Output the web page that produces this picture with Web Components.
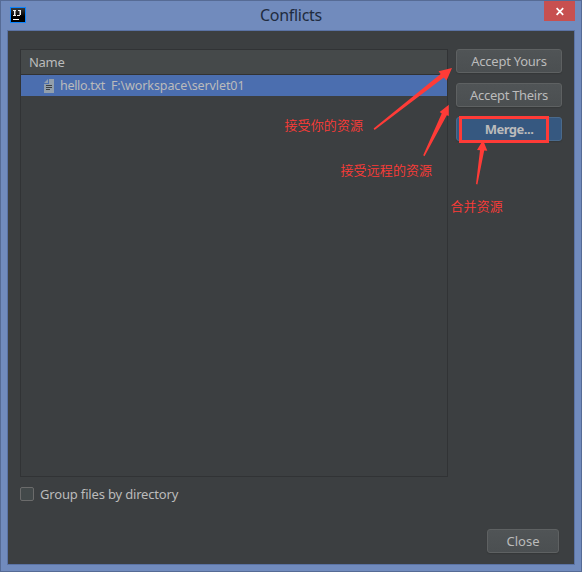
<!DOCTYPE html>
<html lang="en">
<head>
<meta charset="utf-8">
<title>Conflicts</title>
<style>
html, body { margin: 0; height: 100%; overflow: hidden; }
body { font-family: "Noto Sans", "Noto Sans CJK SC", sans-serif; }
</style>
</head>
<body>
<conflicts-window></conflicts-window>
<script>
function define(name, html) {
  const t = document.createElement('template');
  t.innerHTML = html;
  customElements.define(name, class extends HTMLElement {
    constructor() {
      super();
      this.attachShadow({ mode: 'open' }).append(t.content.cloneNode(true));
    }
  });
}

define('app-logo', `
<style>:host{display:block;width:16px;height:16px}svg{display:block}</style>
<svg width="16" height="16" viewBox="0 0 16 16" shape-rendering="crispEdges">
  <defs><linearGradient id="g" x1="0" y1="0" x2="0" y2="1"><stop offset="0" stop-color="#3a3a3a"/><stop offset=".6" stop-color="#000"/></linearGradient></defs>
  <rect width="16" height="16" fill="#0a84ff"/><rect x="1" y="1" width="14" height="14" fill="url(#g)"/>
  <g fill="#f0f0f0"><path d="M3 3h3v1H3zM3 8h3v1H3zM4 4h1v4H4zM8 3h3v1H8zM10 4h1v4h-1zM7 8h3v1H7z"/><path d="M5 4h1v4H5zM9 4h1v4H9z" opacity=".5"/></g>
  <rect x="3" y="12" width="6" height="1" fill="#fff"/>
</svg>`);

define('title-bar', `
<style>
:host{display:grid;grid-template-columns:34px 1fr 34px;height:29px;box-sizing:border-box;color:#1f2b40}
app-logo{margin:6px 0 0 3px}
h1{margin:0;text-align:center;font-size:16px;font-weight:400;line-height:29px;letter-spacing:-.3px}
.close{width:31px;height:20px;background:#c75050;justify-self:end}
svg{display:block}
</style>
<app-logo></app-logo><h1><slot></slot></h1>
<div class="close"><svg width="31" height="20"><path d="M12.6 7.2l6.6 6.6M19.2 7.2l-6.6 6.6" stroke="#fff" stroke-width="1.7"/></svg></div>`);

define('push-button', `
<style>
:host{display:block;box-sizing:border-box;height:24px;border:1px solid #5e6162;border-radius:3px;background:linear-gradient(#505456,#4b4f51);color:#bbb;box-shadow:0 1px 1px #353839;
text-align:center;font-size:13px;line-height:23px;white-space:nowrap;letter-spacing:var(--ls,0)}
:host([primary]){background:#365880;border-color:#4a6a8c;font-weight:700}
</style><slot></slot>`);

define('file-row', `
<style>
:host{display:flex;align-items:center;height:21px;background:#4b6eaf;color:#bbb;padding-left:23px;font-size:12.5px;line-height:21px;white-space:pre}
svg{display:block;margin-right:6px}
.name{letter-spacing:-.32px} .path{margin-left:6px;letter-spacing:-.1px}
</style>
<svg width="10" height="14" viewBox="0 0 10 14"><path d="M5 0h5v14H0V5h5z" fill="#929fac"/><path d="M4 0v4H0z" fill="#929fac"/><path d="M2 6.5h6M2 8.5h6M2 10.5h4" stroke="#3c3f41"/></svg>
<span class="name"><slot name="file"></slot></span><span class="path"><slot name="path"></slot></span>`);

define('file-table', `
<style>
:host{display:flex;flex-direction:column;box-sizing:border-box;width:428px;height:428px;border:1px solid #313335}
header{height:24px;border-bottom:1px solid #323232;background:#45494a;color:#bbb;font-size:13px;line-height:25px;padding-left:8px;letter-spacing:-.3px}
</style><header><slot name="header"></slot></header><slot></slot>`);

define('check-box', `
<style>
:host{display:flex;align-items:center;gap:6px;color:#bbb;font-size:13px;height:18px;line-height:18px;white-space:nowrap}
i{box-sizing:border-box;width:14px;height:14px;border:1px solid #6b6b6b;border-radius:2px;background:#43494a}
span{letter-spacing:-.17px}
</style><i></i><span><slot></slot></span>`);

define('markup-note', `
<style>:host{position:absolute;color:#ff3b37;font:350 13px/18px "Noto Sans CJK SC DemiLight","Noto Sans CJK SC",sans-serif;white-space:nowrap;letter-spacing:.1px}</style><slot></slot>`);

define('markup-layer', `
<style>:host{position:absolute;inset:-1px;pointer-events:none}svg{position:absolute;inset:0}</style>
<svg width="582" height="572" fill="#ff3b37">
  <path d="M373.6 128.6L440.6 74.1L438.6 71.3L452 68L446.6 80.5L443.8 77.6L374.6 130Z"/>
  <path d="M423.2 155.3L441.7 113.5L439.7 111.9L448.8 104.8V116L446.8 115.2L424.5 156.3Z"/>
  <path d="M476 184L480 150.2L477 150L483 140L487.3 150.8L484.2 150.6L477.4 184.4Z"/>
  <rect x="460.5" y="117.5" width="87" height="24" fill="none" stroke="#ff3b37" stroke-width="3"/>
</svg><slot></slot>`);

define('conflicts-window', `
<style>
:host{position:relative;display:flex;flex-direction:column;box-sizing:border-box;width:582px;height:572px;border:1px solid #566b95;background:#718bbd;padding:0 6px 6px}
main{flex:1;box-sizing:border-box;border:1px solid #5b73a5;background:#3c3f41;padding:18px 12px 11px;display:flex;flex-direction:column}
.top{display:flex;gap:8px}
.actions{display:flex;flex-direction:column;gap:10px;width:106px}
check-box{margin-top:8px}
footer{margin-top:auto;display:flex;justify-content:flex-end;padding-right:3px}
footer push-button{width:72px}
</style>
<title-bar>Conflicts</title-bar>
<main>
  <div class="top">
    <file-table><span slot="header">Name</span>
      <file-row><span slot="file">hello.txt</span><span slot="path">F:\\workspace\\servlet01</span></file-row>
    </file-table>
    <div class="actions"><push-button style="--ls:-.25px">Accept Yours</push-button><push-button style="--ls:-.3px">Accept Theirs</push-button><push-button primary style="--ls:-.5px">Merge...</push-button></div>
  </div>
  <check-box>Group files by directory</check-box>
  <footer><push-button>Close</push-button></footer>
</main>
<markup-layer>
  <markup-note style="left:284.5px;top:116px">接受你的资源</markup-note>
  <markup-note style="left:340.5px;top:161px">接受远程的资源</markup-note>
  <markup-note style="left:450.5px;top:197px">合并资源</markup-note>
</markup-layer>`);
</script>
</body>
</html>
